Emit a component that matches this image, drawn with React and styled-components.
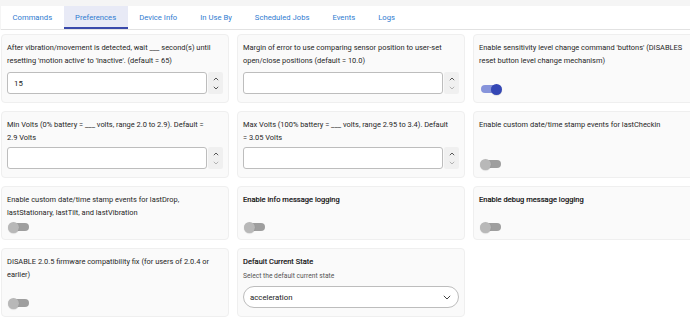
import React from "react";
import styled, { createGlobalStyle } from "styled-components";

const Global = createGlobalStyle`
  html, body { margin: 0; padding: 0; background: #fff; overflow: hidden; }
  body { font-family: Roboto, "Noto Sans", Arial, sans-serif; }
  * { box-sizing: border-box; }
`;

const Page = styled.div`
  width: 720px;
  background: #fff;
`;

const Header = styled.div`
  background: #f5f5f5;
  padding: 6px 0 0 1px;
`;

const TabBar = styled.nav`
  display: flex;
  background: #fff;
  border-bottom: 1px solid #e2e2e2;
  height: 24px;
`;

const Tab = styled.div`
  display: flex;
  align-items: center;
  padding: 0 11.5px;
  height: 23px;
  font-size: 7.7px;
  color: #2f7bd0;
  background: ${(p) => (p.$active ? "#e8eaf6" : "transparent")};
  border-bottom: 2px solid ${(p) => (p.$active ? "#3949ab" : "transparent")};
  padding-top: 2px;
`;

const Grid = styled.div`
  display: grid;
  grid-template-columns: repeat(3, 228px);
  grid-auto-rows: auto;
  gap: 8px;
  padding: 4px 0 0 1px;
`;

const Card = styled.div`
  display: flex;
  flex-direction: column;
  background: #fafafa;
  border: 1px solid #efefef;
  border-radius: 4px;
  padding: 6px 5px ${(p) => (p.$pb ? p.$pb : 7)}px;
`;

const Label = styled.div`
  font-size: 7.45px;
  line-height: 13px;
  padding-right: 1px;
  color: ${(p) => (p.$strong ? "#111" : "#262626")};
  letter-spacing: ${(p) => (p.$strong ? "0.05px" : "0")};
  -webkit-text-stroke: ${(p) => (p.$strong ? "0.2px #111" : "0")};
`;

const Sub = styled.div`
  font-size: 6.7px;
  line-height: 11px;
  color: #555;
  margin-top: 3px;
`;

const Bottom = styled.div`
  margin-top: auto;
  padding-top: ${(p) => (p.$gap !== undefined ? p.$gap : 5)}px;
`;

const NumberRow = styled.div`
  display: flex;
  height: 22px;
`;

const NumberBox = styled.div`
  flex: 1;
  display: flex;
  align-items: center;
  border: 1px solid #bdbdbd;
  border-radius: 3px;
  background: #fff;
  padding: 0 6px;
  font-size: 7.8px;
  color: #222;
`;

const Stepper = styled.div`
  width: 15px;
  display: flex;
  flex-direction: column;
  align-items: center;
  justify-content: center;
  gap: 5px;
  background: #f0f0f0;
  border-radius: 2px;
  margin-left: 1px;
`;

const Chev = ({ up, light }) => (
  <svg width="6" height="4" viewBox="0 0 6 4">
    <path
      d={up ? "M0.8 3.2 L3 1 L5.2 3.2" : "M0.8 0.8 L3 3 L5.2 0.8"}
      fill="none"
      stroke={light ? "#aaa" : "#444"}
      strokeWidth="0.9"
    />
  </svg>
);

const NumberInput = ({ value, downDark }) => (
  <NumberRow>
    <NumberBox>{value}</NumberBox>
    <Stepper>
      <Chev up />
      <Chev light={!downDark} />
    </Stepper>
  </NumberRow>
);

const SwitchWrap = styled.div`
  position: relative;
  width: 22px;
  height: 12px;
  margin-left: 1px;
`;

const Track = styled.div`
  position: absolute;
  left: 1px;
  top: 2px;
  width: 20px;
  height: 8px;
  border-radius: 4px;
  background: ${(p) => (p.$on ? "#8794db" : "#9e9e9e")};
`;

const Knob = styled.div`
  position: absolute;
  top: 0.5px;
  left: ${(p) => (p.$on ? "11px" : "0")};
  width: 11px;
  height: 11px;
  border-radius: 50%;
  background: ${(p) => (p.$on ? "#3447b5" : "#b8b8b8")};
  box-shadow: 0 0.5px 1px rgba(0, 0, 0, 0.2);
`;

const Switch = ({ on }) => (
  <SwitchWrap>
    <Track $on={on} />
    <Knob $on={on} />
  </SwitchWrap>
);

const SelectBox = styled.div`
  display: flex;
  align-items: center;
  justify-content: space-between;
  height: 22px;
  border: 1px solid #bdbdbd;
  border-radius: 11px;
  background: #fff;
  padding: 0 7px 0 6px;
  font-size: 7.8px;
  color: #222;
`;

const tabs = ["Commands", "Preferences", "Device Info", "In Use By", "Scheduled Jobs", "Events", "Logs"];

export default function App() {
  return (
    <Page>
      <Global />
      <Header>
        <TabBar>
          {tabs.map((t) => (
            <Tab key={t} $active={t === "Preferences"}>
              {t}
            </Tab>
          ))}
        </TabBar>
      </Header>
      <Grid>
        <Card $pb={8}>
          <Label>After vibration/movement is detected, wait ___ second(s) until resetting 'motion active' to 'inactive'. (default = 65)</Label>
          <Bottom>
            <NumberInput value="15" downDark />
          </Bottom>
        </Card>
        <Card $pb={8}>
          <Label>Margin of error to use comparing sensor position to user-set open/close positions (default = 10.0)</Label>
          <Bottom>
            <NumberInput value="" />
          </Bottom>
        </Card>
        <Card>
          <Label>Enable sensitivity level change command 'buttons' (DISABLES reset button level change mechanism)</Label>
          <Bottom>
            <Switch on />
          </Bottom>
        </Card>

        <Card $pb={8}>
          <Label>{"Min Volts (0% battery = ___ volts, range 2.0 to 2.9). Default = 2.9\u00a0Volts"}</Label>
          <Bottom $gap={3}>
            <NumberInput value="" />
          </Bottom>
        </Card>
        <Card $pb={8}>
          <Label>{"Max Volts (100% battery = ___ volts, range 2.95 to 3.4). Default =\u00a03.05 Volts"}</Label>
          <Bottom $gap={3}>
            <NumberInput value="" />
          </Bottom>
        </Card>
        <Card>
          <Label>Enable custom date/time stamp events for lastCheckin</Label>
          <Bottom>
            <Switch />
          </Bottom>
        </Card>

        <Card $pb={6}>
          <Label>Enable custom date/time stamp events for lastDrop, lastStationary, lastTilt, and lastVibration</Label>
          <Bottom $gap={2}>
            <Switch />
          </Bottom>
        </Card>
        <Card $pb={6}>
          <Label $strong>Enable info message logging</Label>
          <Bottom $gap={2}>
            <Switch />
          </Bottom>
        </Card>
        <Card $pb={6}>
          <Label $strong>Enable debug message logging</Label>
          <Bottom $gap={2}>
            <Switch />
          </Bottom>
        </Card>

        <Card>
          <Label>DISABLE 2.0.5 firmware compatibility fix (for users of 2.0.4 or earlier)</Label>
          <Bottom>
            <Switch />
          </Bottom>
        </Card>
        <Card $pb={8}>
          <Label $strong>Default Current State</Label>
          <Sub>Select the default current state</Sub>
          <Bottom $gap={4}>
            <SelectBox>
              <span>acceleration</span>
              <svg width="8" height="5" viewBox="0 0 8 5">
                <path d="M0.8 0.8 L4 4 L7.2 0.8" fill="none" stroke="#444" strokeWidth="1" />
              </svg>
            </SelectBox>
          </Bottom>
        </Card>
      </Grid>
    </Page>
  );
}
